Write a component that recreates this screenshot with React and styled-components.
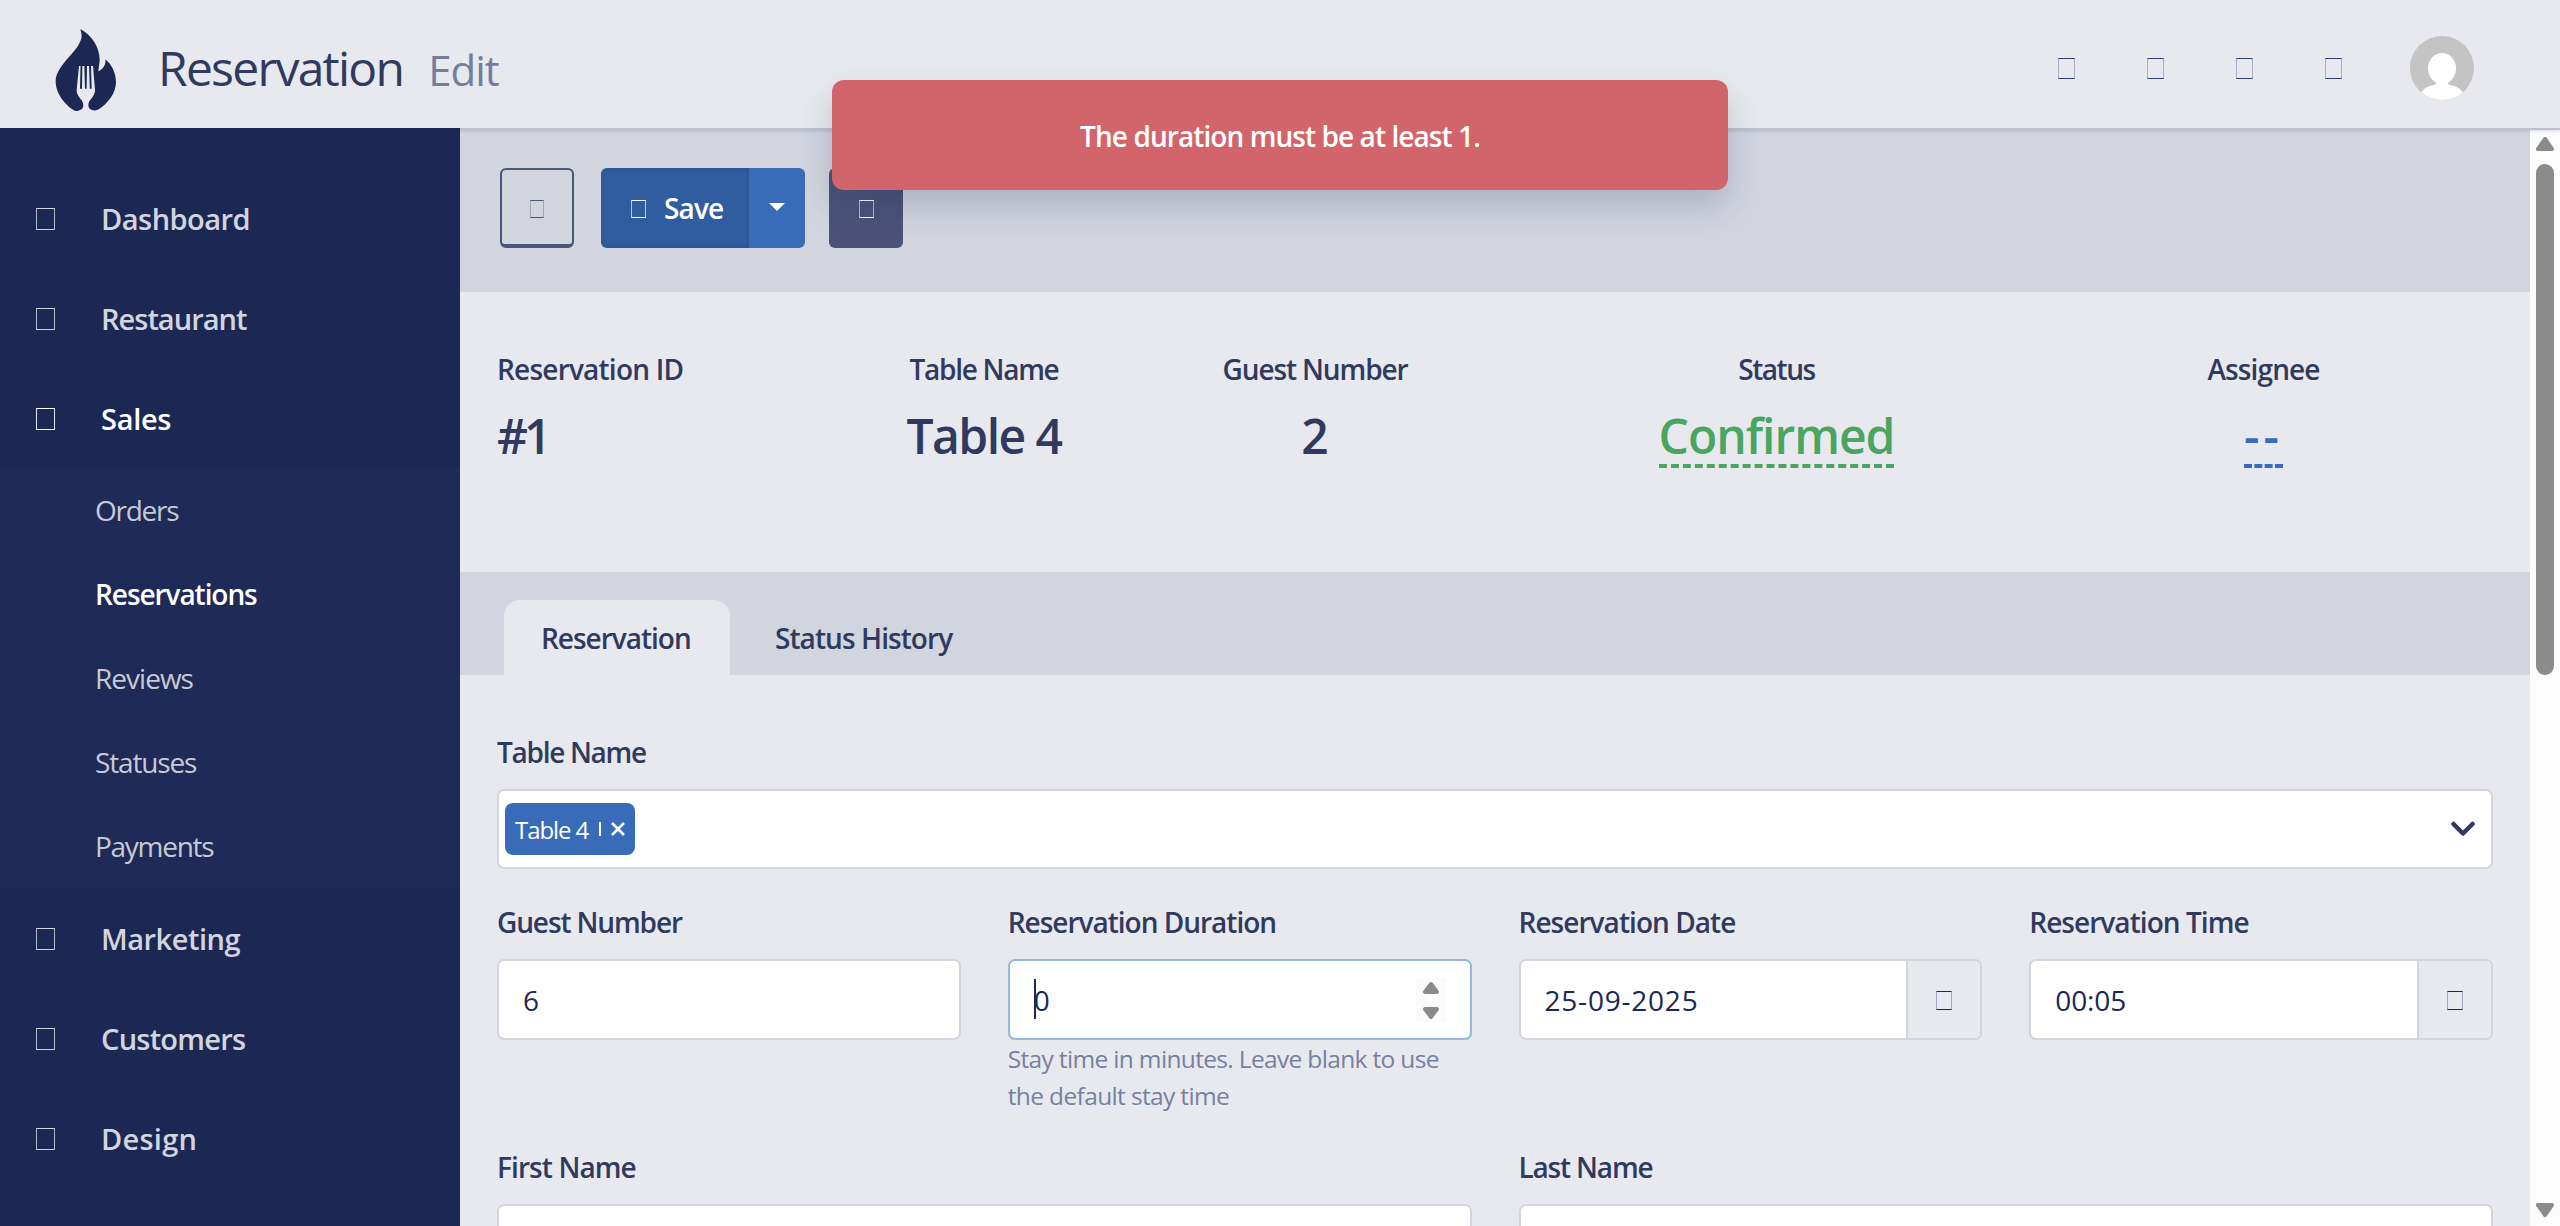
import React from 'react';
import styled, { createGlobalStyle, css } from 'styled-components';

const navy = '#1c2854';
const ink = '#303a5e';
const page = '#e8e9ee';
const line = '#d2d5de';
const blue = '#386cb9';

const GlobalStyle = createGlobalStyle`
  * { box-sizing: border-box; }
  body {
    margin: 0;
    overflow: hidden;
    background: ${page};
    color: ${ink};
    font-family: 'Open Sans', 'Noto Sans', sans-serif;
    font-size: 28px;
  }
`;

const Track = styled.span`
  white-space: nowrap;
  letter-spacing: ${(p) => p.$t || 0}em;
`;

const Shell = styled.div`
  display: flex;
  flex-direction: column;
  width: 2560px;
  height: 1226px;
  overflow: hidden;
`;

/* ---------- header ---------- */

const Header = styled.header`
  position: relative;
  z-index: 1;
  flex: none;
  display: flex;
  align-items: center;
  height: 128px;
  padding: 0 86px 0 52px;
  background: ${page};
  box-shadow: 0 2px 0 #bdc0ce, 0 2px 4px rgba(28, 40, 84, 0.25);
`;

const Logo = styled.svg`
  width: 66px;
  height: 88px;
  margin-top: 12px;
`;

const Heading = styled.div`
  display: flex;
  align-items: baseline;
  gap: 25px;
  margin: 9px auto 0 40px;
  line-height: 64px;
`;

const Title = styled.h1`
  margin: 0;
  font-size: 48px;
  font-weight: 400;
  letter-spacing: -0.036em;
`;

const Subtitle = styled.span`
  font-size: 42px;
  color: #747d9f;
  letter-spacing: -0.025em;
`;

const HeaderActions = styled.div`
  display: flex;
  align-items: center;
  gap: 72px;
  padding-top: 8px;
`;

const Avatar = styled.svg`
  width: 64px;
  height: 64px;
  margin: 8px 0 0 68px;
`;

/* Empty glyph frame shown where the icon font has no glyph */
const Glyph = styled.i`
  flex: none;
  display: block;
  width: ${(p) => p.$w}px;
  height: ${(p) => p.$h}px;
  border: 1px solid ${(p) => p.$side || p.$color};
  border-top-color: ${(p) => p.$color};
  border-bottom-color: ${(p) => p.$color};
`;

const Body = styled.div`
  flex: 1;
  display: flex;
  min-height: 0;
`;

/* ---------- sidebar ---------- */

const Sidebar = styled.nav`
  position: relative;
  z-index: 2;
  flex: none;
  width: 460px;
  padding-top: 40px;
  background: ${navy};
`;

const NavItem = styled.div`
  display: flex;
  align-items: center;
  gap: 46px;
  height: 100px;
  padding-left: 36px;
  font-size: 29px;
  font-weight: 600;
  color: ${(p) => (p.$active ? '#fff' : '#d2d5de')};

  i { margin-top: 2px; }
`;

const SubMenu = styled.div`
  background: #1e2a57;
`;

const SubItem = styled.div`
  display: flex;
  align-items: center;
  height: 84px;
  padding: 0 0 0 95px;
  color: #c8cad3;
  ${(p) => p.$active && css`
    color: #fff;
    font-weight: 600;
  `}
`;

/* ---------- main ---------- */

const Main = styled.main`
  flex: 1;
  min-width: 0;
  overflow: hidden;
`;

const Toolbar = styled.div`
  display: flex;
  height: 164px;
  padding: 40px 0 0 40px;
  background: ${line};
`;

const ToolButton = styled.button`
  display: flex;
  align-items: center;
  justify-content: center;
  width: 74px;
  height: 80px;
  padding: 2px 0 0;
  border: 0;
  border-radius: 6px;
  background: #4a5377;
  ${(p) => p.$outline && css`
    padding-top: 4px;
    border: 2px solid #4a567c;
    border-bottom-width: 4px;
    background: transparent;
  `}
`;

const SaveGroup = styled.div`
  display: flex;
  width: 204px;
  height: 80px;
  margin: 0 24px 0 27px;
  border-radius: 6px;
  overflow: hidden;
`;

const SaveButton = styled.button`
  display: flex;
  align-items: center;
  gap: 18px;
  width: 148px;
  padding: 1px 0 0 30px;
  border: 0;
  background: #305d9f;
  box-shadow: inset 0 0 5px 1px rgba(28, 40, 84, 0.2);
  color: #fff;
  font: 600 28px 'Open Sans', sans-serif;

  span { margin-top: -2px; }
`;

const SaveToggle = styled.button`
  flex: 1;
  display: flex;
  justify-content: center;
  align-items: center;
  padding: 0 0 3px;
  border: 0;
  background: ${blue};

  svg { width: 16px; height: 8px; }
`;

const Summary = styled.section`
  display: grid;
  grid-template-columns: 314px 346px 316px 607px 367px;
  height: 280px;
  padding: 56px 0 0 37px;
`;

const SummaryCell = styled.div`
  text-align: ${(p) => (p.$left ? 'left' : 'center')};
  font-weight: 600;
`;

const SummaryLabel = styled.div`
  line-height: 42px;
  margin-bottom: 18px;
`;

const SummaryValue = styled.div`
  display: inline-block;
  font-size: 48px;
  line-height: 56px;
  ${(p) => p.$link && css`
    color: ${p.$link};
    border-bottom: 4px dashed;
  `}
`;

const Tabs = styled.div`
  display: flex;
  gap: 8px;
  height: 103px;
  padding: 28px 0 0 44px;
  background: ${line};
`;

const Tab = styled.div`
  display: flex;
  align-items: center;
  height: 75px;
  padding: 0 37px;
  border-radius: 16px 16px 0 0;
  font-weight: 600;
  ${(p) => p.$active && css`
    width: 226px;
    background: ${page};
  `}
`;

const Form = styled.form`
  display: flex;
  flex-direction: column;
  gap: 32px;
  padding: 56px 37px 0;
`;

const FieldRow = styled.div`
  display: grid;
  grid-template-columns: repeat(${(p) => p.$cols}, minmax(0, 1fr));
  column-gap: 47px;
`;

const Label = styled.div`
  margin-bottom: 16px;
  line-height: 42px;
  font-weight: 600;
`;

const Control = styled.div`
  display: flex;
  align-items: stretch;
  height: ${(p) => p.$h || 81}px;
  border: 2px solid ${(p) => (p.$focus ? '#94b6df' : line)};
  border-radius: 7px;
  background: #fff;
  overflow: hidden;
  color: ${navy};
`;

const Value = styled.div`
  position: relative;
  flex: 1;
  display: flex;
  align-items: center;
  padding-left: 24px;
`;

const Caret = styled.i`
  position: absolute;
  left: 24px;
  top: 18px;
  width: 2px;
  height: 40px;
  background: ${navy};
`;

const Addon = styled.div`
  display: flex;
  align-items: center;
  justify-content: center;
  width: 74px;
  padding-top: 2px;
  border-left: 2px solid ${line};
  background: ${page};
`;

const Spinner = styled.svg`
  align-self: center;
  flex: none;
  width: 30px;
  height: 44px;
  margin-right: 24px;
  background: #fbfbfb;
`;

const Hint = styled.div`
  font-size: 24.5px;
  line-height: 37px;
  color: #7780a0;
  display: flex;
  flex-direction: column;
`;

const SelectBody = styled.div`
  flex: 1;
  display: flex;
  align-items: center;
  justify-content: space-between;
  padding: 0 16px 0 6px;
`;

const Tag = styled.div`
  display: flex;
  align-items: center;
  width: 130px;
  height: 52px;
  padding-left: 10px;
  border-radius: 8px;
  background: ${blue};
  color: #fff;
  font-size: 24px;
`;

const TagBar = styled.i`
  width: 2px;
  height: 14px;
  margin: 0 10px 0 11px;
  background: #fff;
`;

const Cross = styled.svg`
  width: 14px;
  height: 14px;
`;

const Chevron = styled.svg`
  width: 24px;
  height: 16px;
`;

/* ---------- scrollbar ---------- */

const Scrollbar = styled.div`
  flex: none;
  display: flex;
  flex-direction: column;
  align-items: center;
  width: 30px;
  padding: 9px 0;
  background: #fcfcfc;

  svg { width: 18px; height: 14px; flex: none; }
`;

const Thumb = styled.div`
  width: 18px;
  height: 511px;
  margin: 13px 0 auto;
  border-radius: 9px;
  background: #8b8b8b;
`;

/* ---------- toast ---------- */

const Toast = styled.div`
  position: absolute;
  z-index: 5;
  left: 832px;
  top: 80px;
  display: flex;
  align-items: center;
  justify-content: center;
  width: 896px;
  height: 110px;
  padding-top: 2px;
  border-radius: 12px;
  background: #d2656b;
  box-shadow: 0 16px 32px rgba(28, 40, 84, 0.2);
  color: #fff;
  font-weight: 600;
`;

const Triangle = ({ down }) => (
  <svg viewBox="0 0 18 14">
    <path
      d={down ? 'M2 2H16L9 12Z' : 'M2 12H16L9 2Z'}
      fill="#8b8b8b"
      stroke="#8b8b8b"
      strokeWidth="4"
      strokeLinejoin="round"
    />
  </svg>
);

const topNav = [['Dashboard', -0.018], ['Restaurant', -0.034], ['Sales', -0.011]];
const subNav = [['Orders', -0.045], ['Reservations', -0.038], ['Reviews', -0.035], ['Statuses', -0.041], ['Payments', -0.046]];
const bottomNav = [['Marketing', -0.017], ['Customers', -0.026], ['Design', 0.009]];

const NavEntry = ({ name, track, active }) => (
  <NavItem $active={active}>
    <Glyph $w={19} $h={22} $color={active ? '#fff' : '#d2d5de'} $side={active ? '#dfe6f5' : '#a9bccb'} />
    <Track $t={track}>{name}</Track>
  </NavItem>
);

const Field = ({ label, track, children }) => (
  <div>
    <Label><Track $t={track}>{label}</Track></Label>
    {children}
  </div>
);

export default function App() {
  return (
    <Shell>
      <GlobalStyle />
      <Header>
        <Logo viewBox="96 48 198 264">
          <path
            fill={navy}
            d="M181 57C206 70 240 104 239 152L235 184C249 179 259 163 256 148C276 164 288 190 288 217C288 250 263 281 236 298C220 307 205 298 205 286C205 281 206 277 208 274C221 257 225 250 225 240L219 168H177L170 240C170 250 174 258 185 271C188 276 190 280 190 286C190 297 179 305 165 302C140 290 107 252 107 215C107 160 186 121 185 74Z"
          />
          <path fill={navy} d="M181.500 168H187L186 236H180ZM193 168H201L200 236H195ZM207 168H213L215 236H209.500Z" />
        </Logo>
        <Heading>
          <Title>Reservation</Title>
          <Subtitle>Edit</Subtitle>
        </Heading>
        <HeaderActions>
          {[0, 1, 2, 3].map((i) => (
            <Glyph key={i} $w={17} $h={21} $color="#303f6e" $side="#a9aec3" />
          ))}
        </HeaderActions>
        <Avatar viewBox="0 0 64 64">
          <defs>
            <clipPath id="face"><circle cx="32" cy="32" r="32" /></clipPath>
          </defs>
          <g clipPath="url(#face)">
            <rect width="64" height="64" fill="#c4c4c4" />
            <ellipse cx="32" cy="32.500" rx="14" ry="15.500" fill="#fff" />
            <path d="M26 44H38C37 49 39 49 44 50C50 52 53 55 54 60V66H10V60C11 55 14 52 20 50C25 49 27 49 26 44Z" fill="#fff" />
          </g>
        </Avatar>
      </Header>

      <Body>
        <Sidebar>
          {topNav.map(([n, t]) => <NavEntry key={n} name={n} track={t} active={n === 'Sales'} />)}
          <SubMenu>
            {subNav.map(([n, t]) => (
              <SubItem key={n} $active={n === 'Reservations'}><Track $t={t}>{n}</Track></SubItem>
            ))}
          </SubMenu>
          {bottomNav.map(([n, t]) => <NavEntry key={n} name={n} track={t} />)}
        </Sidebar>

        <Main>
          <Toolbar>
            <ToolButton $outline><Glyph $w={14} $h={18} $color="#4a567c" $side="#9fa6bb" /></ToolButton>
            <SaveGroup>
              <SaveButton>
                <Glyph $w={15} $h={18} $color="#fff" $side="#b9cae2" />
                <Track $t={-0.031}>Save</Track>
              </SaveButton>
              <SaveToggle>
                <svg viewBox="0 0 16 8"><path d="M0 0H16L8 8Z" fill="#fff" /></svg>
              </SaveToggle>
            </SaveGroup>
            <ToolButton><Glyph $w={15} $h={18} $color="#fff" $side="#b4b8c8" /></ToolButton>
          </Toolbar>

          <Summary>
            <SummaryCell $left>
              <SummaryLabel><Track $t={-0.028}>Reservation ID</Track></SummaryLabel>
              <SummaryValue><Track $t={-0.083}>#1</Track></SummaryValue>
            </SummaryCell>
            <SummaryCell>
              <SummaryLabel><Track $t={-0.046}>Table Name</Track></SummaryLabel>
              <SummaryValue><Track $t={-0.032}>Table 4</Track></SummaryValue>
            </SummaryCell>
            <SummaryCell>
              <SummaryLabel><Track $t={-0.040}>Guest Number</Track></SummaryLabel>
              <SummaryValue>2</SummaryValue>
            </SummaryCell>
            <SummaryCell>
              <SummaryLabel><Track $t={-0.052}>Status</Track></SummaryLabel>
              <SummaryValue $link="#49a55f"><Track $t={-0.021}>Confirmed</Track></SummaryValue>
            </SummaryCell>
            <SummaryCell>
              <SummaryLabel><Track $t={-0.031}>Assignee</Track></SummaryLabel>
              <SummaryValue $link={blue}><Track $t={0.085}>--</Track></SummaryValue>
            </SummaryCell>
          </Summary>

          <Tabs>
            <Tab $active><Track $t={-0.036}>Reservation</Track></Tab>
            <Tab><Track $t={-0.033}>Status History</Track></Tab>
          </Tabs>

          <Form>
            <Field label="Table Name" track={-0.046}>
              <Control $h={80}>
                <SelectBody>
                  <Tag>
                    <Track $t={-0.045}>Table 4</Track>
                    <TagBar />
                    <Cross viewBox="0 0 14 14"><path d="M1 1L13 13M13 1L1 13" stroke="#fff" strokeWidth="2.600" /></Cross>
                  </Tag>
                  <Chevron viewBox="0 0 24 16">
                    <path d="M2.500 3L12 12.500L21.500 3" fill="none" stroke={ink} strokeWidth="4.500" strokeLinecap="round" strokeLinejoin="round" />
                  </Chevron>
                </SelectBody>
              </Control>
            </Field>

            <FieldRow $cols={4}>
              <Field label="Guest Number" track={-0.040}>
                <Control><Value>6</Value></Control>
              </Field>
              <Field label="Reservation Duration" track={-0.036}>
                <Control $focus>
                  <Value>0<Caret /></Value>
                  <Spinner viewBox="0 0 30 44">
                    <path d="M9 14H21L15 6Z M9 31H21L15 39Z" fill="#8b8b8b" stroke="#8b8b8b" strokeWidth="4" strokeLinejoin="round" />
                  </Spinner>
                </Control>
                <Hint>
                  <Track $t={-0.027}>Stay time in minutes. Leave blank to use</Track>
                  <Track $t={-0.026}>the default stay time</Track>
                </Hint>
              </Field>
              <Field label="Reservation Date" track={-0.034}>
                <Control>
                  <Value><Track $t={0.028}>25-09-2025</Track></Value>
                  <Addon><Glyph $w={16} $h={19} $color={navy} $side="#a0a7bf" /></Addon>
                </Control>
              </Field>
              <Field label="Reservation Time" track={-0.034}>
                <Control>
                  <Value><Track $t={-0.004}>00:05</Track></Value>
                  <Addon><Glyph $w={16} $h={19} $color={navy} $side="#a0a7bf" /></Addon>
                </Control>
              </Field>
            </FieldRow>

            <FieldRow $cols={2}>
              <Field label="First Name" track={-0.032}><Control /></Field>
              <Field label="Last Name" track={-0.042}><Control /></Field>
            </FieldRow>
          </Form>
        </Main>

        <Scrollbar>
          <Triangle />
          <Thumb />
          <Triangle down />
        </Scrollbar>
      </Body>

      <Toast><Track $t={-0.033}>The duration must be at least 1.</Track></Toast>
    </Shell>
  );
}
